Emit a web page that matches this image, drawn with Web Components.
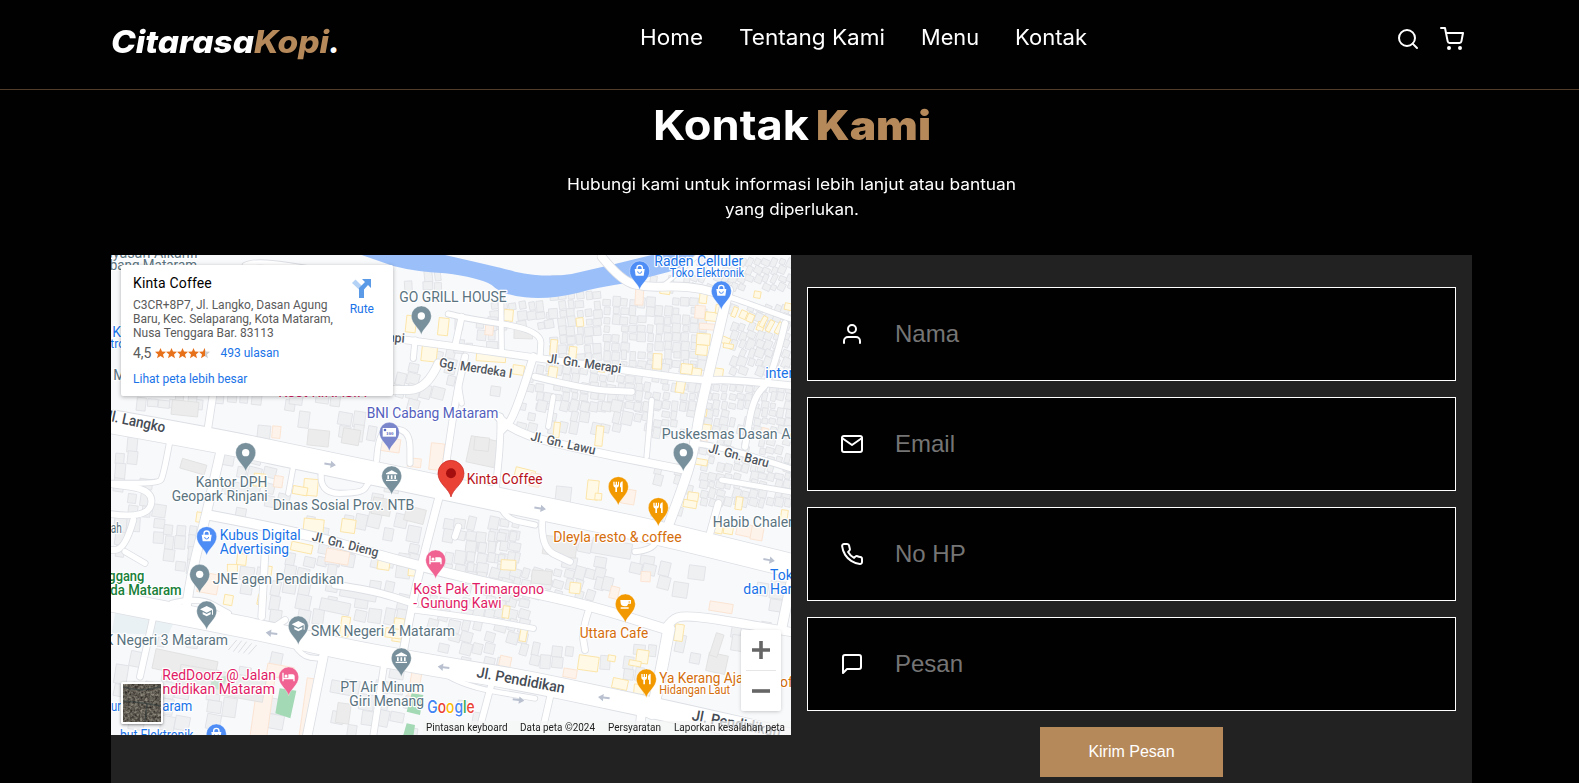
<!DOCTYPE html>
<html lang="id">
<head>
<meta charset="utf-8">
<title>CitarasaKopi - Kontak Kami</title>
<style>
html,body{margin:0;background:#010101;color:#fff;font-family:Inter,"Open Sans",sans-serif;overflow:hidden;height:100%}
</style>
</head>
<body>
<contact-page></contact-page>
<script>
const define=(name,html,setup)=>customElements.define(name,class extends HTMLElement{
  connectedCallback(){
    if(this.shadowRoot)return;
    this.attachShadow({mode:'open'}).innerHTML=typeof html==='function'?html(this):html;
    if(setup)setup(this,this.shadowRoot);
  }
});

/* Text widened or narrowed so that it fills a given width */
define('fit-text','<style>:host{display:inline-block;white-space:nowrap}span{display:inline-block;transform-origin:0 50%}</style><span><slot></slot></span>',(el,root)=>{
  const s=root.querySelector('span'),w=+el.getAttribute('w');
  s.style.transform='scaleX('+w/s.getBoundingClientRect().width+')';
  el.style.width=w+'px';
});

const icons={
  search:'<circle cx="11" cy="11" r="8"/><line x1="21" y1="21" x2="16.65" y2="16.65"/>',
  cart:'<circle cx="9" cy="21" r="1"/><circle cx="20" cy="21" r="1"/><path d="M1 1h4l2.68 13.39a2 2 0 0 0 2 1.61h9.72a2 2 0 0 0 2-1.61L23 6H6"/>',
  user:'<path d="M20 21v-2a4 4 0 0 0-4-4H8a4 4 0 0 0-4 4v2"/><circle cx="12" cy="7" r="4"/>',
  mail:'<path d="M4 4h16c1.1 0 2 .9 2 2v12c0 1.1-.9 2-2 2H4c-1.1 0-2-.9-2-2V6c0-1.1.9-2 2-2z"/><polyline points="22,6 12,13 2,6"/>',
  phone:'<path d="M22 16.92v3a2 2 0 0 1-2.18 2 19.79 19.79 0 0 1-8.63-3.07 19.5 19.5 0 0 1-6-6 19.79 19.79 0 0 1-3.07-8.67A2 2 0 0 1 4.11 2h3a2 2 0 0 1 2 1.72 12.84 12.84 0 0 0 .7 2.81 2 2 0 0 1-.45 2.11L8.09 9.91a16 16 0 0 0 6 6l1.27-1.27a2 2 0 0 1 2.11-.45 12.84 12.84 0 0 0 2.81.7A2 2 0 0 1 22 16.92z"/>',
  message:'<path d="M21 15a2 2 0 0 1-2 2H7l-4 4V5a2 2 0 0 1 2-2h14a2 2 0 0 1 2 2z"/>'
};
define('line-icon',el=>`<style>:host{display:block;width:24px;height:24px}svg{display:block}</style>
<svg width="24" height="24" viewBox="0 0 24 24" fill="none" stroke="#fff" stroke-width="2" stroke-linecap="round" stroke-linejoin="round">${icons[el.getAttribute('name')]}</svg>`);

define('site-header',`<style>
:host{display:flex;justify-content:space-between;align-items:flex-start;height:89px;padding:0 115px 0 111px;box-sizing:content-box;border-bottom:1px solid #513d29;background:#010101}
.logo{font-size:31.500px;font-weight:800;font-style:italic;line-height:40px;padding-top:22px;display:flex}
.logo b{color:#b6895b;font-weight:800}
nav{display:flex;padding-top:23px;font-size:21px;line-height:30px;gap:36px;margin-right:9px}
.tools{display:flex;gap:20px;padding-top:27px}
</style>
<div class="logo"><fit-text w="143">Citarasa</fit-text><b><fit-text w="75">Kopi</fit-text></b><span>.</span></div>
<nav><fit-text w="63">Home</fit-text><fit-text w="146">Tentang Kami</fit-text><fit-text w="58">Menu</fit-text><fit-text w="72">Kontak</fit-text></nav>
<div class="tools"><line-icon name="search"></line-icon><line-icon name="cart"></line-icon></div>`);

define('section-title',`<style>
:host{display:flex;flex-direction:column;align-items:center;height:165px;box-sizing:border-box;padding-top:5px}
h2{margin:0;font-size:41px;line-height:60px;font-weight:700;display:flex;gap:7px}
h2 b{color:#b6895b}
p{margin:17px 0 0;font-size:16px;line-height:25px;display:flex;flex-direction:column;align-items:center}
</style><h2><fit-text w="156">Kontak</fit-text><b><fit-text w="115">Kami</fit-text></b></h2>
<p><fit-text w="449">Hubungi kami untuk informasi lebih lanjut atau bantuan</fit-text><fit-text w="134">yang diperlukan.</fit-text></p>`);

define('form-field',el=>`<style>
:host{display:flex;align-items:center;height:92px;border:1px solid #fff;background:#010101;padding-left:32px}
span{margin-left:31px;font:24px/28px "Liberation Sans",Arial,sans-serif;color:#757575}
</style><line-icon name="${el.getAttribute('icon')}"></line-icon><span><slot></slot></span>`);

define('contact-form',`<style>
:host{display:flex;flex-direction:column;gap:16px;flex:1;padding:32px 16px 0;align-items:stretch}
button{align-self:center;border:0;background:#b6895b;color:#fff;width:183px;height:50px;font:16px "Liberation Sans",Arial,sans-serif;padding:0;margin:0}
</style>
<form-field icon="user">Nama</form-field><form-field icon="mail">Email</form-field>
<form-field icon="phone">No HP</form-field><form-field icon="message">Pesan</form-field>
<button>Kirim Pesan</button>`);

define('place-card',()=>{
  const star=(x,f)=>`<path transform="translate(${x} 0)" fill="${f}" d="M5.5 0 7 3.6l4 .2-3 2.6 1 3.8-3.5-2.1L2 10.200l1-3.800-3-2.600 4-.2z"/>`;
  return `<style>
:host{display:flex;justify-content:space-between;width:272px;height:131px;box-sizing:border-box;background:#fff;border-radius:2px;box-shadow:0 1px 4px rgba(0,0,0,.3);padding:10px 19px 0 12px;font-family:Roboto,sans-serif;color:#000}
.name{font-size:14px;line-height:17px;font-weight:400;letter-spacing:.15px}
.addr{font-size:12px;line-height:14px;color:#5b5b5b;margin-top:6px;width:203px}
.row{display:flex;align-items:center;margin-top:4px;height:18px;font-size:14px;color:#5b5b5b}
svg{display:block}.row svg{margin:0 11px 0 3px}
a{color:#1a73e8;font-size:12px;line-height:14px}
.more{display:block;margin-top:10px}
.rute{display:flex;flex-direction:column;align-items:center;gap:4px;padding-top:4px}
</style>
<div><div class="name">Kinta Coffee</div>
<div class="addr">C3CR+8P7, Jl. Langko, Dasan Agung Baru, Kec. Selaparang, Kota Mataram, Nusa Tenggara Bar. 83113</div>
<div class="row">4,5<svg width="55" height="11" viewBox="0 0 55 11"><defs><linearGradient id="h"><stop offset=".55" stop-color="#e7711b"/><stop offset=".55" stop-color="#ccc"/></linearGradient></defs>${[0,11,22,33].map(x=>star(x,'#e7711b')).join('')}${star(44,'url(#h)')}</svg><a>493 ulasan</a></div>
<a class="more">Lihat peta lebih besar</a></div>
<div class="rute"><svg width="20" height="19" viewBox="0 0 20 19"><path d="M0 4 3.500.500 11 8 8 11.500Z" fill="#b3d2f6"/><path d="M10 0h9v9l-3-3-4 4.500V19H7V9l6-6z" fill="#5a9ae6"/></svg><a>Rute</a></div>`;
});

define('zoom-control',`<style>
:host{display:flex;flex-direction:column;align-items:center;width:40px;height:81px;background:#fff;border-radius:2px;box-shadow:0 1px 4px -1px rgba(0,0,0,.3)}
svg{display:block}i{width:30px;height:1px;background:#e6e6e6}
</style><svg width="40" height="40"><path d="M11 20h18M20 11v18" stroke="#666" stroke-width="3.600"/></svg><i></i><svg width="40" height="40"><path d="M11 20h18" stroke="#666" stroke-width="3.600"/></svg>`);

define('satellite-thumb',`<style>:host{display:block;border:2px solid #fff;border-radius:2px;box-shadow:0 1px 3px rgba(0,0,0,.45);width:38px;height:38px}svg{display:block}</style>
<svg width="38" height="38"><filter id="n" x="0" y="0" width="1" height="1" color-interpolation-filters="sRGB"><feTurbulence type="fractalNoise" baseFrequency=".4" numOctaves="3" seed="8"/><feColorMatrix values=".6 0 0 0 .08 .6 0 0 0 .06 .55 0 0 0 .05 0 0 0 0 1"/></filter><rect width="38" height="38" filter="url(#n)"/><path d="M0 3Q20 9 38 2M0 17Q18 18 38 22M24 20 22 38" stroke="#34403f" stroke-width="1.500" fill="none" opacity=".6"/></svg>`);

define('map-attribution',`<style>
:host{display:flex;align-items:center;justify-content:flex-end;gap:13px;height:14px;background:rgba(245,245,245,.72);padding:0 6px 0 3px;font:10px/14px Roboto,sans-serif;color:#222}
</style><fit-text w="81.500">Pintasan keyboard</fit-text><fit-text w="75">Data peta ©2024</fit-text><fit-text w="53">Persyaratan</fit-text><fit-text w="111">Laporkan kesalahan peta</fit-text>`);

/* Street canvas: drawn at three units to the pixel */
const gray='#5a7380',blue='#1a73e8',orange='#d56e0c',pink='#df1b66',street='#50565e';
function drawMap(){
  let seed=11;const rnd=()=>(seed=(seed*16807)%2147483647)/2147483647;
  const tone=['fill="#eff0f2" stroke="#dfe1e5"','fill="#fff9e6" stroke="#fbe2a0"','fill="#fdf3ea" stroke="#fbe2cf"','fill="#ececec" stroke="#e0e0e0"'];
  const box=(x,y,w,h,a,t)=>`<rect x="${(-w/2).toFixed(1)}" y="${(-h/2).toFixed(1)}" width="${w.toFixed(1)}" height="${h.toFixed(1)}" transform="translate(${x.toFixed(1)} ${y.toFixed(1)}) rotate(${a})" ${tone[t]}/>`;
  let b='';
  /* x0,y0,x1,y1,average lot,density,angle */
  const blocks=[[1150,150,1340,230,30,.85,-8],[1330,120,1500,340,28,.9,-5],[1490,140,1800,350,28,.82,4],[1560,25,1760,130,26,.1,8],
  [1750,20,2060,130,26,.75,24],[1870,160,2060,380,28,.85,22],[1260,340,1760,470,29,.82,9],[1770,400,2060,560,26,.9,12],
  [1230,450,1640,560,34,.75,12],[1640,450,1760,560,28,.5,9],[1780,560,2060,760,27,.8,14],[1640,640,1760,820,32,.25,14],[890,60,1000,180,32,.6,-4],
  [865,290,1040,480,40,.45,14],[1040,200,1180,310,36,.75,3],[1070,360,1240,480,42,.28,6],[20,440,280,480,36,.4,5],[450,440,800,560,44,.3,8],
  [340,600,560,840,46,.38,12],[640,680,1000,800,52,.28,10],[20,560,170,930,42,.5,6],[170,820,290,960,38,.7,6],[590,790,940,960,42,.5,12],[1010,800,1230,960,36,.7,11],
  [1080,840,1240,990,33,.65,8],[1320,860,1640,960,50,.26,10],[20,1060,440,1180,34,.12,10],[400,900,920,1110,46,.45,10],[960,1000,1320,1240,37,.62,14],[1150,950,1500,1050,34,.8,16],
  [1300,1180,1640,1340,38,.35,6],[1480,930,1680,1080,46,.45,13],[1700,1110,1990,1240,46,.45,10],[1700,940,2050,1090,52,.28,8],[20,1200,600,1440,50,.42,10],
  [670,1240,960,1460,48,.36,10],[1000,1340,1320,1440,48,.3,8],[200,380,800,460,42,.55,6]];
  for(const [x0,y0,x1,y1,s,d,a] of blocks)
    for(let y=y0+s/2;y<y1;y+=s*.95)for(let x=x0+s/2;x<x1;x+=s*.93){
      if(rnd()>d)continue;
      const r=rnd(),w=s*(.55+rnd()*.4),h=s*(.6+rnd()*.55);
      b+=box(x+rnd()*5,y+rnd()*6,w,h,a+rnd()*5-2.500,r<.008?1:r<.015?2:0);
    }
  /* Larger and coloured lots */
  [[918,222,30,50,6,1],[1015,230,30,52,6,1],[973,308,46,52,6,1],[1158,323,88,24,4,1],[1240,360,34,28,8,1],[1210,196,28,34,5,1],[1153,238,24,34,6,2],
   [1255,252,56,28,2,3],[1346,292,20,46,5,1],[1403,310,22,40,6,1],[1343,370,26,40,8,1],[1603,140,24,50,3,2],[1680,124,30,16,8,1],[1795,140,22,40,6,1],[1785,186,30,38,4,2],[1820,200,38,26,6,1],
   [1845,178,26,26,8,1],[1806,230,46,18,4,2],[1795,268,40,34,4,1],[1790,300,34,30,6,1],[1862,272,26,20,24,1],[1870,288,30,14,10,1],[1657,334,26,46,3,1],[1745,357,34,30,6,1],
   [1775,368,28,26,8,1],[1832,368,44,28,8,1],[1726,410,26,36,10,1],[1889,186,14,30,22,1],[1915,194,20,24,24,1],[1936,204,20,24,24,1],[1975,215,14,34,28,1],[1995,228,14,36,28,1],[2022,234,14,36,28,1],[1957,134,20,20,10,1],[2050,170,22,20,12,1],
   [640,564,64,48,6,3],[738,560,52,46,10,3],[855,585,60,40,8,2],[928,638,40,26,6,2],[995,620,40,80,6,2],[265,650,76,30,16,3],[240,475,80,44,6,3],
   [463,690,34,38,6,1],[520,695,26,34,8,2],[617,712,42,50,5,1],[585,722,44,24,10,1],[626,826,60,38,6,1],[730,828,42,40,8,1],[286,802,24,30,8,1],[697,920,70,40,10,2],[590,893,64,26,12,1],[836,942,36,34,8,1],[830,770,56,50,10,3],[930,795,60,44,14,3],
   [1133,605,86,80,12,3],[1130,582,44,40,6,3],[1368,90,56,26,2,0],[1463,720,34,58,6,1],[1480,740,20,20,5,1],[1375,735,46,50,6,0],[1260,670,60,26,14,1],[1290,690,30,40,10,2],[1355,540,18,46,6,1],[1483,558,22,60,6,1],[1570,740,40,44,10,2],[1650,780,22,40,6,0],
   [1764,740,32,26,8,1],[1755,762,40,22,10,1],[1902,760,20,38,8,1],[1795,488,20,20,8,1],[1800,540,34,34,8,1],[1787,636,40,18,10,1],[1870,840,28,24,10,1],[1840,835,26,30,10,1],[1918,840,46,36,12,2],[1956,850,36,40,10,2],[2038,795,20,30,8,1],
   [1365,890,100,56,8,3],[1520,895,120,46,10,0],[1210,945,44,30,3,1],[410,928,28,34,6,1],[382,958,30,30,0,1],[487,962,26,28,8,1],[925,965,30,26,6,1],[310,1000,60,60,10,2],[470,1050,24,30,10,1],
   [370,1050,26,30,10,1],[720,1130,26,60,8,1],[880,1140,30,70,8,1],[866,1150,50,28,8,1],[1410,1014,32,32,6,1],[1203,1086,20,36,8,1],[1255,1154,20,40,10,1],[1622,980,28,30,3,2],[1528,1028,26,36,14,2],
   [1612,1220,36,40,8,1],[1590,1240,36,16,10,1],[1450,1240,60,44,8,1],[1520,1225,22,18,10,1],[1545,1302,46,30,12,1],[1200,1238,34,38,12,2],[1395,1270,40,26,10,2],[1420,1312,22,16,10,2],[1602,1318,30,30,5,1],[1627,1352,18,20,5,1],[1722,1148,26,50,8,1],[1848,1072,70,28,9,2],
   [1836,1240,58,56,12,3],[1835,1185,24,70,18,3],[1310,982,60,40,5,3],[760,1030,110,34,10,0],[690,1070,90,36,12,0],[525,1265,80,38,10,2],[470,1390,50,210,8,2],[610,1390,36,210,8,2],[930,1300,30,80,10,2],[240,1245,190,60,12,3],[350,1300,260,70,10,3],[715,1390,40,60,8,3]
  ].forEach(l=>b+=box(...l));

  const roads=[[70,'18 515 330 570 675 643 1020 714 1305 775 1660 848 1990 930 2080 952'],[62,'0 1050 180 1085 300 1108 500 1148 700 1195 1000 1250 1250 1290 1500 1343 1720 1390 2070 1470'],
  [28,'310 795 600 850 820 915 1020 968 1220 1015 1460 1068 1690 1140'],[25,'1680 1138 1700 1108 1735 1097 1820 1105 2070 1148'],[34,'1692 1136 1668 1270 1640 1390'],
  [20,'865 265 1020 285 1250 318 1520 355 1790 393 1870 388 2070 408'],[22,'1285 320 1230 500 1190 540'],[18,'1186 500 1188 560 1172 720'],[23,'1180 500 1220 548 1460 605 1740 660'],[28,'1870 120 1852 200 1785 480 1768 590 1745 680 1685 840'],
  [15,'1870 140 1900 150 2070 212'],[24,'1490 20 1550 95 1630 112 1710 108 1790 115 1870 140'],[10,'1670 110 1720 70 1780 15'],[18,'2040 220 2000 390 1945 440 1920 590'],[16,'1770 580 1850 590 2070 660'],[15,'1850 690 2070 728'],[20,'1840 760 1815 850'],
  [20,'340 330 305 560'],[26,'348 600 305 790 262 960 245 1065'],[22,'1005 730 950 940 925 1045 888 1240'],[19,'1080 320 1060 400 1035 560 1015 700'],[16,'1030 192 1080 205 1310 240 1305 320'],[14,'1188 150 1190 310'],[18,'1070 200 1050 290'],[16,'930 270 925 325'],[24,'1000 340 965 420 860 420'],
  [14,'420 45 450 30 640 60'],[26,'655 1220 600 1490'],[18,'838 1240 800 1490'],[20,'480 910 470 1100'],[18,'145 1100 105 1280'],[14,'565 1180 590 1220 640 1225'],[18,'1455 1070 1430 1140 1440 1200'],[16,'930 1080 1120 1105 1285 1135'],[18,'1340 1320 1315 1430'],[18,'1160 1300 1125 1430'],
  [28,'2060 990 2030 1135'],[20,'690 1005 800 1020 930 1062'],[18,'1315 780 1300 890 1395 935'],[16,'1185 760 1195 805 1290 825'],[16,'1590 905 1640 900 1660 860'],[16,'815 630 820 550 865 532 915 550 915 640'],[14,'565 650 550 730'],[16,'650 660 638 730 770 730 790 700'],
  [16,'195 570 175 680 160 700 0 700'],[18,'0 790 125 810 150 720 0 700'],[18,'85 810 60 900 0 900'],[16,'60 905 120 940'],[14,'1025 1275 1080 1310 1290 1345'],[18,'1060 830 1050 860'],[14,'1640 450 1625 620'],[14,'1345 440 1330 530'],[14,'1060 400 1070 460'],[18,'1290 380 1450 420 1580 425'],[26,'1610 1380 1600 1490'],[16,'200 1060 280 1040 370 1090'],[18,'480 1150 540 1110']];
  const path=(p)=>{const n=p.split(' ').map(Number);let d=`M${n[0]} ${n[1]}`;for(let i=2;i<n.length-2;i+=2)d+=`Q${n[i]} ${n[i+1]} ${(n[i]+n[i+2])/2} ${(n[i+1]+n[i+3])/2}`;return d+`L${n[n.length-2]} ${n[n.length-1]}`;};
  const line=(p,w,c)=>`<path d="${path(p)}" stroke="${c}" stroke-width="${w}" fill="none" stroke-linecap="round" stroke-linejoin="round"/>`;
  const water='<path fill="#9bbff9" d="M770 15H1020Q1200 56 1230 65Q1320 84 1400 72L1530 42 1640 15H1785Q1740 50 1690 66L1560 100Q1480 112 1420 128Q1330 150 1260 142Q1190 135 1160 105Q1120 82 1020 70Q930 65 865 48Z"/>';
  let r=roads.map(([w,p])=>line(p,w+5,'#dcdfe4')).join('')+roads.map(([w,p])=>line(p,w,'#fff')).join('');
  const greens='<g fill="#a3d9b4"><path d="M524 1315 574 1322 556 1405 511 1390ZM920 1330 955 1335 945 1395 905 1385ZM905 1420 930 1425 925 1460 895 1455Z"/><path d="M320 1290 370 1275 350 1320 315 1315Z" opacity=".45"/></g><path d="M30 1090 205 1120 190 1155 20 1150Z" fill="#eaf1f5"/><path d="M370 1200 395 1170M385 1205 410 1172M400 1208 425 1175M415 1210 440 1180M430 1213 455 1185" stroke="#dcdee2" stroke-width="3"/>';
  const arrow=(x,y,a)=>`<path transform="translate(${x} ${y}) rotate(${a})" d="M-17-3H2V-11L18 0 2 11V3H-17Z" fill="#b9c0cf"/>`;
  const arrows=[[675,643,8],[1305,775,8],[1992,930,10],[500,1150,187],[1016,1252,187],[1497,1343,187],[1240,1350,8]].map(a=>arrow(...a)).join('');

  const glyph={
    dot:'<circle r="11" fill="#fff"/>',
    bag:'<path d="M-15-6H15L12 14H-12Z" fill="#fff"/><path d="M-8-5V-9A8 8 0 0 1 8-9V-5" fill="none" stroke="#fff" stroke-width="4"/><path d="M-6 1A6 6 0 0 0 6 1" fill="none" stroke="#4e8df5" stroke-width="3"/>',
    food:'<path d="M-15-15V-4A7 7 0 0 0-9 3V16H-4V3A7 7 0 0 0 2-4V-15H-1V-6H-4V-15H-8V-6H-11V-15ZM8 16V2H5V-8Q6-15 13-16V16Z" fill="#fff"/>',
    cafe:'<path d="M-15-12H17V-1H9Q7 7-1 7-13 7-14-2ZM10-8V-4H13V-8ZM-14 10H10V14H-14Z" fill="#fff"/>',
    bed:'<path d="M-19-13H-15V2H-1V-8H12Q18-8 18-2V13H14V7H-15V13H-19Z" fill="#fff"/><circle cx="-8" cy="-3" r="4.500" fill="#fff"/>',
    gov:'<path d="M0-17 17-8V-5H-17V-8ZM-13-2H-8V9H-13ZM-2.500-2H2.500V9H-2.500ZM8-2H13V9H8ZM-17 11H17V15H-17Z" fill="#fff"/>',
    school:'<path d="M0-15 20-5 0 5-20-5ZM-12 3 0 9 12 3V10L0 16-12 10ZM16-3H19V11H16Z" fill="#fff"/>',
    bank:'<rect x="-20" y="-13" width="40" height="26" fill="#fff"/><circle cx="-13" cy="-7" r="4" fill="#5c6bc0"/><text x="-10" y="9" font-size="15" font-weight="700" font-family="Liberation Serif" fill="#5c6bc0">100</text>'};
  const pin=(x,y,c,g)=>`<g transform="translate(${x} ${y})"><path d="M0 56C-4 38-30 24-30 0A30 30 0 1 1 30 0C30 24 4 38 0 56Z" fill="${c}" stroke="#fff" stroke-width="1"/>${glyph[g]}</g>`;
  const G='#78909c',B='#4e8df5',O='#f29900',P='#f06292';
  const pins=[[949,198,G,'dot'],[1604,63,B,'bag'],[1849,123,B,'bag'],[853,547,'#7986cb','bank'],[422,608,G,'dot'],[860,678,G,'gov'],[305,860,B,'bag'],[1540,710,O,'food'],[1660,773,O,'food'],[1735,608,G,'dot'],[992,930,P,'bed'],[284,973,G,'dot'],[305,1083,G,'school'],[580,1128,G,'school'],[551,1281,P,'bed'],[889,1224,G,'gov'],[1561,1062,O,'cafe'],[1624,1287,O,'food'],[334,1452,B,'bag']].map(p=>pin(...p)).join('')
   +'<g transform="translate(1038 670)"><path d="M0 71C-5 46-39 32-39 0A39 39 0 1 1 39 0C39 32 5 46 0 71Z" fill="#ea4335" stroke="#c5221f" stroke-width="2"/><circle r="15" fill="#a50e0e"/></g>';

  /* text, x, baseline, width, size, colour, angle, weight */
  const labels=[['ayasan Alkahfi',0,24,278,14,gray],['bang Mataram',14,61,262,14,gray],['K',22,262,0,14,blue],['tro',16,295,0,12,blue],['M',25,390,0,14,gray],
  ['api',848,274,50,13,street,5,500],['GO GRILL HOUSE',883,156,322,14,gray],['Raden Celluler',1648,47,267,14,blue],['Toko Elektronik',1694,82,223,12,blue],
  ['Gg. Merdeka I',1001,350,221,13,street,8.800,500],['Jl. Gn. Merapi',1325,338,224,13,street,8,500],['interna',1981,383,0,14,blue],['Kost KINASIH',520,441,267,14,pink],
  ['BNI Cabang Mataram',785,503,395,14,'#5460bd'],['Jl. Langko',-4,509,186,15,'#454b54',12,500],['Kantor DPH',272,710,215,14,gray],['Geopark Rinjani',200,753,288,14,gray],['Dinas Sosial Prov. NTB',503,780,425,14,gray],
  ['Kubus Digital',344,870,243,14,blue],['Advertising',344,912,208,14,blue],['Jl. Gn. Dieng',619,871,204,13,street,14,500],['ah',17,848,33,14,gray],['Kinta Coffee',1085,702,228,14,'#b8121a'],
  ['Jl. Gn. Lawu',1275,571,198,13,street,12.500,500],['Puskesmas Dasan Agung',1670,567,480,14,gray],['Jl. Gn. Baru',1808,606,186,13,street,14.500,500],['Habib Chaleri',1823,830,0,14,gray],['Dleyla resto & coffee',1345,877,385,14,orange],
  ['Toko',1995,990,0,14,blue],['dan Harga',1915,1032,0,14,blue],['ggang',10,993,108,14,'#188038',0,500],['da Mataram',16,1035,214,14,'#188038',0,500],['JNE agen Pendidikan',323,1002,394,14,gray],
  ['Kost Pak Trimargono',925,1032,392,14,pink],['- Gunung Kawi',925,1075,265,14,pink],['SMK Negeri 4 Mataram',618,1158,432,14,gray],['SMK Negeri 3 Mataram',-63,1185,432,14,gray],['Uttara Cafe',1424,1164,206,14,orange],
  ['RedDoorz @ Jalan',172,1290,341,14,pink],['Pendidikan Mataram',124,1332,386,14,pink],['PT Air Minum',706,1326,252,14,gray],['Giri Menang',733,1368,224,14,gray],['Jl. Pendidikan',1113,1281,268,15,'#454b54',10.500,500],
  ['Ya Kerang Aja',1663,1299,252,14,orange],['offee',2025,1312,0,14,orange],['Hidangan Laut',1663,1333,212,12,orange],['Jl. Pendidikan',1759,1410,270,15,'#454b54',11,500],['ur',18,1383,30,14,blue],['aram',172,1383,90,14,blue],['but Elektronik',45,1470,220,14,blue]]
  .map(([t,x,y,w,s,c,a=0,k=400])=>`<text transform="translate(${x} ${y}) rotate(${a})" font-size="${s*3}" font-weight="${k}" fill="${c}" ${w?`textLength="${w}" lengthAdjust="spacingAndGlyphs"`:''} stroke="#fff" stroke-width="7" stroke-linejoin="round" paint-order="stroke">${t.replace('&','&amp;')}</text>`).join('');
  const logo='<text x="967" y="1388" font-size="50" font-family="Inter" font-weight="500" textLength="142" lengthAdjust="spacingAndGlyphs" stroke="#fff" stroke-width="6" paint-order="stroke"><tspan fill="#4285f4">G</tspan><tspan fill="#ea4335">o</tspan><tspan fill="#fbbc04">o</tspan><tspan fill="#4285f4">g</tspan><tspan fill="#34a853">l</tspan><tspan fill="#ea4335">e</tspan></text>';
  return `<svg width="680" height="480" viewBox="0 0 680 480" font-family="Roboto, sans-serif"><rect width="680" height="480" fill="#f8f9fb"/><g transform="translate(-6 -5) scale(.333333)"><g stroke-width="2.500">${b}</g>${greens}${water}${r}${arrows}${pins}${labels}${logo}</g></svg>`;
}
define('map-view',()=>`<style>
:host{display:block;position:relative;width:680px;height:480px;overflow:hidden;flex:none}
svg{display:block}place-card,zoom-control,satellite-thumb,map-attribution{position:absolute}
place-card{left:10px;top:10px}zoom-control{right:10px;top:375px}satellite-thumb{left:10px;top:427px}map-attribution{right:0;bottom:0}
</style>${drawMap()}<map-attribution></map-attribution><place-card></place-card><satellite-thumb></satellite-thumb><zoom-control></zoom-control>`);

define('contact-page',`<style>
:host{display:block}
.row{display:flex;align-items:flex-start;width:1361px;margin-left:111px;height:528px;background:#222}
section-title{margin-left:4px}
</style><site-header></site-header><section-title></section-title>
<div class="row"><map-view></map-view><contact-form></contact-form></div>`);
</script>
</body>
</html>
